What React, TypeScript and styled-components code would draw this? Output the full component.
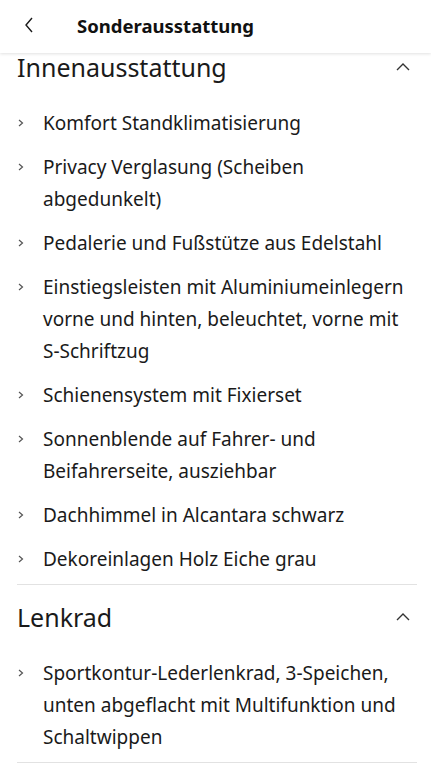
import styled, { createGlobalStyle } from "styled-components"

const GlobalStyle = createGlobalStyle`
    html, body {
        margin: 0;
        padding: 0;
        background: #ffffff;
    }
    body {
        font-family: "Noto Sans", "Open Sans", sans-serif;
        color: #1a1a1a;
    }
`

type Section = {
    title: string
    items: string[]
}

const sections: Section[] = [
    {
        title: "Innenausstattung",
        items: [
            "Komfort Standklimatisierung",
            "Privacy Verglasung (Scheiben abgedunkelt)",
            "Pedalerie und Fußstütze aus Edelstahl",
            "Einstiegsleisten mit Aluminiumeinlegern vorne und hinten, beleuchtet, vorne mit S-Schriftzug",
            "Schienensystem mit Fixierset",
            "Sonnenblende auf Fahrer- und Beifahrerseite, ausziehbar",
            "Dachhimmel in Alcantara schwarz",
            "Dekoreinlagen Holz Eiche grau",
        ],
    },
    {
        title: "Lenkrad",
        items: [
            "Sportkontur-Lederlenkrad, 3-Speichen, unten abgeflacht mit Multifunktion und Schaltwippen",
        ],
    },
]

export default function App() {
    return (
        <Page>
            <GlobalStyle />
            <Header>
                <BackButton aria-label="Zurück">
                    <svg width="10" height="16" viewBox="0 0 10 16" fill="none">
                        <path d="M8 1 L2 8 L8 15" stroke="#1a1a1a" strokeWidth="1.4" />
                    </svg>
                </BackButton>
                <Title>Sonderausstattung</Title>
            </Header>
            <Content>
                {sections.map((s) => (
                    <SectionBlock key={s.title}>
                        <SectionHead>
                            <SectionTitle>{s.title}</SectionTitle>
                            <svg width="14" height="8" viewBox="0 0 14 8" fill="none">
                                <path d="M1 7 L7 1 L13 7" stroke="#333" strokeWidth="1.4" />
                            </svg>
                        </SectionHead>
                        <List>
                            {s.items.map((item) => (
                                <Item key={item}>
                                    <Bullet>
                                        <svg width="6" height="8" viewBox="0 0 6 8" fill="none">
                                            <path d="M1 1 L4.5 4 L1 7" stroke="#555" strokeWidth="1.2" />
                                        </svg>
                                    </Bullet>
                                    <ItemText>{item}</ItemText>
                                </Item>
                            ))}
                        </List>
                    </SectionBlock>
                ))}
            </Content>
        </Page>
    )
}

const Page = styled.div`
    width: 431px;
    height: 768px;
    overflow: hidden;
    background: #ffffff;
`

const Header = styled.header`
    position: relative;
    z-index: 2;
    height: 53px;
    display: flex;
    align-items: center;
    background: #ffffff;
    box-shadow: 0 1px 3px rgba(0, 0, 0, 0.12);
`

const BackButton = styled.button`
    width: 77px;
    height: 53px;
    padding: 0 0 3px 24px;
    border: none;
    background: none;
    display: flex;
    align-items: center;
`

const Title = styled.h1`
    margin: 0 0 3px;
    font-size: 18.5px;
    font-weight: 700;
    color: #111;
`

const Content = styled.main`
    position: relative;
    z-index: 1;
    margin-top: -18px;
    padding: 0 14px 0 17px;
`

const SectionBlock = styled.section`
    border-bottom: 1px solid #e2e2e2;
`

const SectionHead = styled.div`
    height: 66px;
    display: flex;
    align-items: center;
    justify-content: space-between;
    padding-right: 7px;

    svg {
        margin-bottom: 2px;
    }
`

const SectionTitle = styled.h2`
    margin: 0 0 2px;
    font-size: 25px;
    font-weight: 400;
    color: #1a1a1a;
`

const List = styled.ul`
    list-style: none;
    margin: 0;
    padding: 6px 0 9px;
    display: flex;
    flex-direction: column;
    gap: 12px;
`

const Item = styled.li`
    display: flex;
    align-items: flex-start;
`

const Bullet = styled.span`
    width: 25px;
    height: 32px;
    flex-shrink: 0;
    display: flex;
    align-items: center;
    padding-left: 1px;
`

const ItemText = styled.span`
    font-size: 19px;
    line-height: 32px;
    color: #1a1a1a;
`
